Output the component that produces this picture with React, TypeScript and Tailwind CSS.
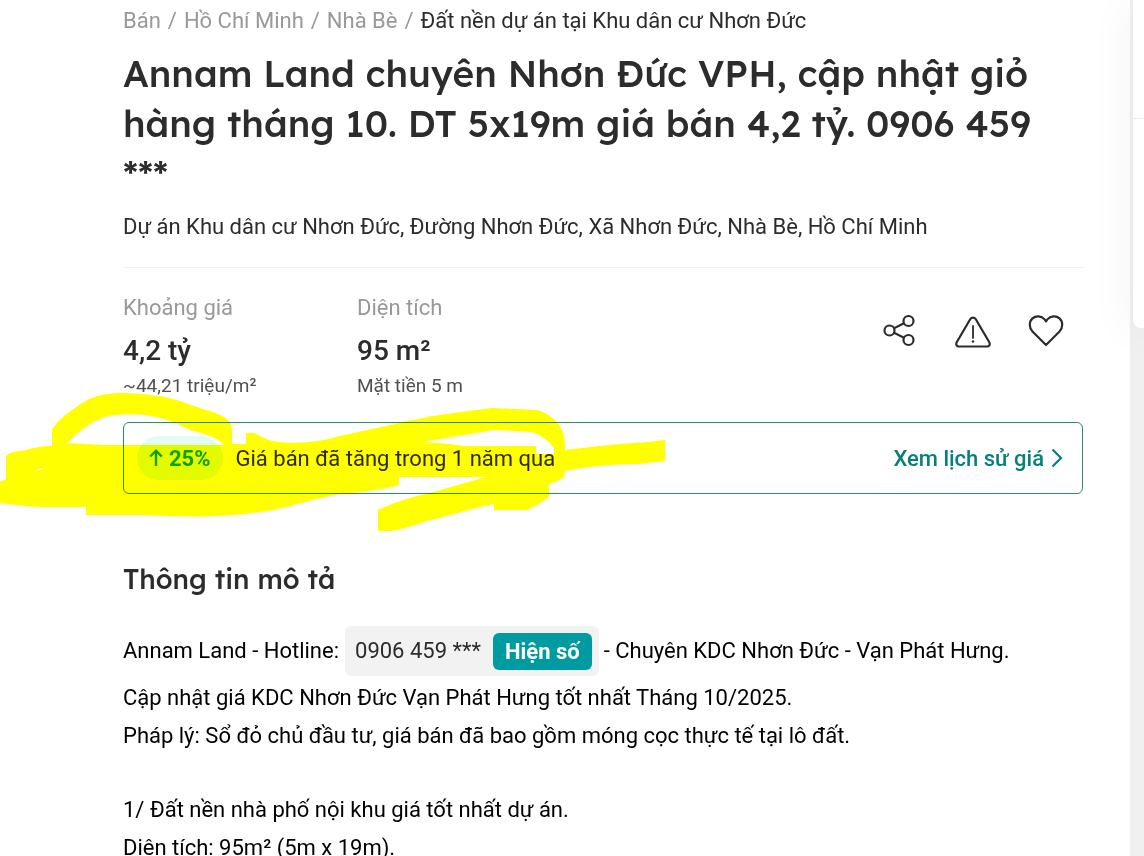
import React from "react";

const crumbs = ["Bán", "Hồ Chí Minh", "Nhà Bè"];

const facts = [
  { label: "Khoảng giá", value: "4,2 tỷ", note: "~44,21 triệu/m²" },
  { label: "Diện tích", value: "95 m²", note: "Mặt tiền 5 m" },
];

const paragraphs = [
  [
    "Cập nhật giá KDC Nhơn Đức Vạn Phát Hưng tốt nhất Tháng 10/2025.",
    "Pháp lý: Sổ đỏ chủ đầu tư, giá bán đã bao gồm móng cọc thực tế tại lô đất.",
  ],
  [
    "1/ Đất nền nhà phố nội khu giá tốt nhất dự án.",
    "Diện tích: 95m² (5m x 19m).",
  ],
];

const headingFont = "font-['Lexend','Inter',sans-serif] font-medium text-[#2c2c2c]";

function ShareIcon() {
  return (
    <svg className="block" width="38" height="38" viewBox="0 0 38 38" fill="none" stroke="currentColor" strokeWidth="2.2">
      <circle cx="8.500" cy="18.500" r="5" />
      <circle cx="27.500" cy="9" r="5" />
      <circle cx="27.500" cy="28" r="5" />
      <path d="M13 16.200 23 11.200M13 20.800l10 5" />
    </svg>
  );
}

function WarningIcon() {
  return (
    <svg className="block" width="38" height="38" viewBox="0 0 38 38" fill="none" stroke="currentColor" strokeWidth="2.2" strokeLinecap="round" strokeLinejoin="round">
      <path d="M16.200 7.200 2.700 30.200C1.600 32.400 2.600 34.500 5 34.500H33C35.400 34.500 36.400 32.400 35.300 30.200L21.800 7.200C20.500 5 17.500 5 16.200 7.200Z" />
      <path d="M19 14v12" strokeWidth="1.8" />
      <circle cx="19" cy="29.500" r="1.200" fill="currentColor" stroke="none" />
    </svg>
  );
}

function HeartIcon() {
  return (
    <svg className="block" width="38" height="38" viewBox="0 0 38 38" fill="none" stroke="currentColor" strokeWidth="2.2" strokeLinejoin="round">
      <path d="M19 33 5.500 19.500C1.800 15.600 2 9.500 5.500 6.400 9 3.300 14.500 3.800 17.600 7.400L19 9.300 20.400 7.400C23.500 3.800 29 3.300 32.500 6.400 36 9.500 36.200 15.600 32.500 19.500Z" />
    </svg>
  );
}

function HighlighterMarks() {
  return (
    <svg
      className="pointer-events-none absolute left-0 top-[390px] mix-blend-multiply"
      width="680"
      height="150"
      viewBox="0 390 680 150"
      fill="#ffff00"
      aria-hidden="true"
    >
      <path
        fillRule="evenodd"
        d="M52 446V430C58 419 70 411 84 402C96 395 106 393 125 393C148 394 166 396 183 402C200 409 214 411 224 417Q232 422 232 431V444H246V433H254C266 439 270 442 290 443Q318 443 340 436L400 423C430 415 470 411 492 408L538 410Q555 416 562 430Q566 440 565 450L600 446C625 443 645 443 665 440V461L638 464C610 464 585 467 565 471Q565 478 560 480L549 484V497Q542 503 527 510H494V504C465 510 450 516 430 520Q405 529 391 531H378V510C390 504 410 497 430 493Q458 485 486 477H399V485Q380 491 340 494C310 499 290 508 260 512C215 519 175 516 140 515H86V507H50C30 507 15 505 0 503V482L6 479V456Q11 451 22 451C35 447 44 446 52 446ZM67 443C80 430 92 421 108 416Q125 413 145 415C165 418 175 422 190 430C205 434 217 437 224 445H104ZM422 442C440 439 470 434 494 430L532 432Q546 437 554 448V454H536V446H465Q445 443 422 442ZM34 471Q39 468 45 468Q39 471 34 471Z"
      />
    </svg>
  );
}

export default function App() {
  return (
    <div className="flex min-h-screen overflow-x-hidden bg-white font-['Roboto',sans-serif] text-[22px] text-[#2c2c2c]">
      <main className="relative min-w-0 flex-1 pl-[123px] pr-[47px] pt-[5px]">
        <nav aria-label="Breadcrumb" className="flex gap-[7px] leading-8 text-[#999999]">
          {crumbs.map((c) => (
            <React.Fragment key={c}>
              <a href="#">{c}</a>
              <span>/</span>
            </React.Fragment>
          ))}
          <a href="#" className="text-[#2c2c2c]">Đất nền dự án tại Khu dân cư Nhơn Đức</a>
        </nav>

        <h1 className={`${headingFont} mr-8 mt-[11px] text-[37px] leading-[50px]`}>
          Annam Land chuyên Nhơn Đức VPH, cập nhật giỏ hàng tháng 10. DT 5x19m giá bán 4,2 tỷ. 0906 459 ***
        </h1>

        <p className="mt-[13px] leading-8">
          Dự án Khu dân cư Nhơn Đức, Đường Nhơn Đức, Xã Nhơn Đức, Nhà Bè, Hồ Chí Minh
        </p>

        <section className="mt-6 flex items-start justify-between border-t border-[#f0f0f0] pt-6">
          <dl className="flex">
            {facts.map((f) => (
              <div key={f.label} className="w-[234px]">
                <dt className="leading-8 text-[#999999]">{f.label}</dt>
                <dd className="mt-[7px] text-[28px] font-medium leading-10">{f.value}</dd>
                <dd className="mt-[3px] text-[19px] leading-6 text-[#505050]">{f.note}</dd>
              </div>
            ))}
          </dl>
          <div className="mr-[18px] mt-5 flex gap-[35px]">
            <button type="button" aria-label="Chia sẻ"><ShareIcon /></button>
            <button type="button" aria-label="Báo xấu"><WarningIcon /></button>
            <button type="button" aria-label="Lưu tin"><HeartIcon /></button>
          </div>
        </section>

        <section className="mt-6 flex h-[72px] items-center rounded-md border border-[#2a8f5f] px-[13px]">
          <span className="flex h-11 items-center gap-[6px] rounded-full bg-[#e2fbf3] px-3 font-bold text-[#12a00c]">
            <svg width="14" height="18" viewBox="0 0 14 18" fill="none" stroke="currentColor" strokeWidth="2.400">
              <path d="M7 17V2M1.200 7.500 7 1.800l5.800 5.700" />
            </svg>
            25%
          </span>
          <span className="ml-[13px]">Giá bán đã tăng trong 1 năm qua</span>
          <a href="#" className="ml-auto mr-[6px] flex items-center gap-[7px] font-medium text-[#07807c]">
            Xem lịch sử giá
            <svg width="12" height="20" viewBox="0 0 12 20" fill="none" stroke="currentColor" strokeWidth="2.200">
              <path d="M1.500 1.500 10 10l-8.500 8.500" />
            </svg>
          </a>
        </section>

        <h2 className={`${headingFont} mt-[65px] text-[27px] leading-10`}>Thông tin mô tả</h2>

        <div className="mt-[27px] leading-[38px] text-black">
          <div className="flex items-center whitespace-pre">
            <span>Annam Land - Hotline:</span>
            <span className="ml-[6px] mr-[5px] flex items-center gap-3 rounded-md bg-[#f2f2f2] py-[6px] pl-[10px] pr-[7px] text-[#2c2c2c]">
              0906 459 ***
              <button type="button" className="rounded-md bg-[#009ba1] px-3 font-bold leading-[37px] text-white">
                Hiện số
              </button>
            </span>
            <span>- Chuyên KDC Nhơn Đức - Vạn Phát Hưng.</span>
          </div>
          <div className="mt-[3px] flex flex-col gap-9">
            {paragraphs.map((lines) => (
              <div key={lines[0]}>
                {lines.map((line) => (
                  <p key={line}>{line}</p>
                ))}
              </div>
            ))}
          </div>
        </div>

        <HighlighterMarks />
      </main>

      <aside className="w-[14px] shrink-0 bg-[#f0f0f0] pl-[3px]">
        <div className="h-[328px] rounded-bl-lg bg-white shadow-[0_4px_40px_rgba(0,0,0,0.1)]">
          <div className="h-[119px] border-b border-[#ececec]" />
        </div>
      </aside>
    </div>
  );
}
